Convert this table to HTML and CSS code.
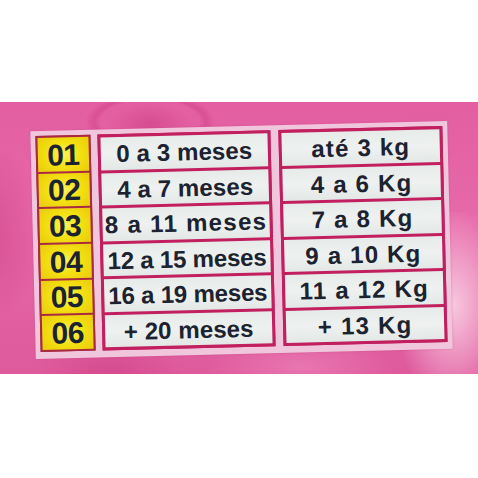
FILE: index.html
```html
<!DOCTYPE html>
<html lang="pt">
<head>
<meta charset="utf-8">
<title>Tabela de tamanhos</title>
<link rel="stylesheet" href="styles.css">
</head>
<body>
<div class="band">
  <div class="glare"></div>
  <div class="label">
    <div class="col nums">
      <div class="cell num">01</div>
      <div class="cell num">02</div>
      <div class="cell num">03</div>
      <div class="cell num">04</div>
      <div class="cell num">05</div>
      <div class="cell num">06</div>
    </div>
    <div class="col ages">
      <div class="cell txt">0 a 3 meses</div>
      <div class="cell txt">4 a 7 meses</div>
      <div class="cell txt wide">8 a 11 meses</div>
      <div class="cell txt tight">12 a 15 meses</div>
      <div class="cell txt tight">16 a 19 meses</div>
      <div class="cell txt">+ 20 meses</div>
    </div>
    <div class="col kgs">
      <div class="cell txt">até 3 kg</div>
      <div class="cell txt">4 a 6 Kg</div>
      <div class="cell txt">7 a 8 Kg</div>
      <div class="cell txt">9 a 10 Kg</div>
      <div class="cell txt">11 a 12 Kg</div>
      <div class="cell txt">+ 13 Kg</div>
    </div>
  </div>
</div>
</body>
</html>
```

FILE: styles.css
```css
html, body {
  margin: 0;
  padding: 0;
  background: #ffffff;
  width: 478px;
  height: 478px;
  overflow: hidden;
}

.band {
  position: relative;
  margin-top: 102px;
  height: 272px;
  padding: 24px 0 0 33px;
  box-sizing: border-box;
  overflow: hidden;
  background:
    radial-gradient(ellipse 60px 30px at 150px 22px, rgba(190, 40, 110, 0.35), rgba(190, 40, 110, 0) 70%),
    radial-gradient(ellipse 90px 40px at 150px 20px, rgba(245, 150, 200, 0.0) 55%, rgba(200, 50, 120, 0.35) 62%, rgba(245, 150, 200, 0) 72%),
    radial-gradient(ellipse 70px 110px at -10px 130px, rgba(200, 50, 120, 0.45), rgba(200, 50, 120, 0) 80%),
    radial-gradient(ellipse 120px 40px at 300px 265px, rgba(245, 150, 200, 0.45), rgba(245, 150, 200, 0) 80%),
    radial-gradient(ellipse 90px 40px at 110px 270px, rgba(190, 40, 110, 0.3), rgba(190, 40, 110, 0) 80%),
    linear-gradient(180deg, #e35ea2 0%, #e66aa9 45%, #de5a9c 100%);
}

.glare {
  position: absolute;
  right: -30px;
  top: 110px;
  width: 110px;
  height: 170px;
  background: radial-gradient(ellipse at 50% 55%, rgba(255, 235, 245, 0.75), rgba(255, 220, 238, 0.35) 45%, rgba(255, 220, 238, 0) 75%);
  pointer-events: none;
}

.label {
  position: relative;
  width: 417px;
  height: 228px;
  box-sizing: border-box;
  padding: 5px 5px 7px 5px;
  background: #f0c6dc;
  display: flex;
  gap: 7px;
  transform: rotate(-1.4deg);
  transform-origin: 50% 50%;
  box-shadow: 0 0 2px rgba(200, 60, 120, 0.5);
}

.col {
  display: grid;
  grid-template-rows: repeat(6, minmax(0, 1fr));
  box-sizing: border-box;
  height: 216px;
}

.nums {
  width: 55px;
  border: 2px solid #a92a40;
  background: #a92a40;
  row-gap: 2px;
}

.ages {
  width: 173px;
  border: 3px solid #c21f5f;
  background: #c21f5f;
  row-gap: 3px;
}

.kgs {
  width: 164px;
  margin-left: 1px;
  border: 3px solid #c21f5f;
  background: #c21f5f;
  row-gap: 3px;
}

.cell {
  display: flex;
  align-items: center;
  justify-content: center;
  font-family: "Liberation Sans", Arial, sans-serif;
  font-weight: bold;
  color: #1b2230;
  white-space: nowrap;
  line-height: 1;
  overflow: hidden;
}

.num {
  font-size: 30px;
  letter-spacing: -0.5px;
  padding-top: 2px;
  background: radial-gradient(ellipse 70% 80% at 50% 50%, #fbf25a 0%, #f3e112 45%, #e9c80a 100%);
}

.txt {
  font-size: 24px;
  letter-spacing: 0.6px;
  padding-top: 2px;
  background: linear-gradient(180deg, #e6ebea 0%, #eef1f0 50%, #e3e8e7 100%);
}

.ages .txt {
  letter-spacing: 0.1px;
}

.ages .wide {
  letter-spacing: 1.3px;
}

.ages .tight {
  letter-spacing: -0.2px;
}

.kgs .txt {
  letter-spacing: 1.2px;
}
```
